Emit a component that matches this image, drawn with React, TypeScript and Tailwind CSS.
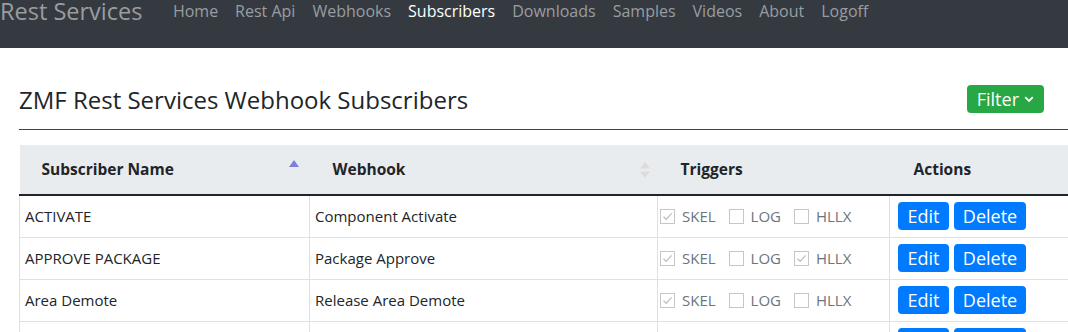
import React from "react";

const navItems = ["Home", "Rest Api", "Webhooks", "Subscribers", "Downloads", "Samples", "Videos", "About", "Logoff"];

type Row = { name: string; hook: string; skel: boolean; log: boolean; hllx: boolean };
const rows: Row[] = [
  { name: "ACTIVATE", hook: "Component Activate", skel: true, log: false, hllx: false },
  { name: "APPROVE PACKAGE", hook: "Package Approve", skel: true, log: false, hllx: true },
  { name: "Area Demote", hook: "Release Area Demote", skel: true, log: false, hllx: false },
  { name: "Area Promote", hook: "Release Area Promote", skel: true, log: false, hllx: false },
];

function Box({ checked }: { checked: boolean }) {
  return (
    <span className="inline-flex h-[15px] w-[15px] items-center justify-center border border-[#c6c6c6] bg-white">
      {checked && (
        <svg width="11" height="11" viewBox="0 0 11 11" fill="none">
          <path d="M1.5 5.8 L4.2 8.4 L9.6 2.4" stroke="#bdbdbd" strokeWidth="1.2" />
        </svg>
      )}
    </span>
  );
}

function Trig({ label, checked }: { label: string; checked: boolean }) {
  return (
    <span className="flex items-center gap-[7px]">
      <Box checked={checked} />
      <span className="text-[#6c757d]">{label}</span>
    </span>
  );
}

export default function App() {
  return (
    <div
      className="w-[1068px] h-[332px] overflow-hidden bg-white text-[#212529]"
      style={{ fontFamily: '"Open Sans", "Noto Sans", sans-serif' }}
    >
      <nav className="flex h-[48px] items-start bg-[#343a40]">
        <span className="-mt-[5px] text-[23.5px] leading-[32px] text-[#9a9da0]">Rest Services</span>
        <ul className="ml-[22px] flex -mt-[1px]">
          {navItems.map((n) => (
            <li
              key={n}
              className={`px-[8.5px] text-[16px] leading-[24px] ${n === "Subscribers" ? "text-white" : "text-[#9a9da0]"}`}
            >
              {n}
            </li>
          ))}
        </ul>
      </nav>

      <div className="ml-[19px] w-[1049px]">
        <div className="flex w-[1025px] items-start justify-between pt-[37px] h-[81px]">
          <h2 className="text-[24px] leading-[32px] -mt-[1px]">ZMF Rest Services Webhook Subscribers</h2>
          <button className="flex h-[28px] items-center gap-[5px] rounded-[4px] bg-[#28a745] px-[10px] text-[18px] text-white">
            Filter
            <svg width="10" height="7" viewBox="0 0 10 7" fill="none">
              <path d="M1.2 1.2 L5 5 L8.8 1.2" stroke="white" strokeWidth="1.8" />
            </svg>
          </button>
        </div>
        <div className="h-[1px] w-full bg-[#e00000]" />

        <table className="mt-[15px] w-[1049px] table-fixed border-collapse text-[15px]">
          <colgroup>
            <col className="w-[290px]" />
            <col className="w-[348px]" />
            <col className="w-[232px]" />
            <col className="w-[179px]" />
          </colgroup>
          <thead>
            <tr className="h-[50px] border-b-2 border-[#212529]">
              <th className="relative bg-[#e9ecef] pl-[22px] text-left font-bold text-[15.5px]">
                Subscriber Name
                <svg className="absolute right-[11px] top-[15px]" width="10" height="7" viewBox="0 0 10 7">
                  <path d="M5 0 L10 7 L0 7 Z" fill="#7d7ddc" />
                </svg>
              </th>
              <th className="relative bg-[#e9ecef] pl-[23px] text-left font-bold text-[15.5px]">
                Webhook
                <svg className="absolute right-[8px] top-[17px]" width="10" height="16" viewBox="0 0 10 16">
                  <path d="M5 0 L10 6.5 L0 6.5 Z M5 16 L10 9.5 L0 9.5 Z" fill="#dcdcdc" />
                </svg>
              </th>
              <th className="bg-[#e9ecef] pl-[23px] text-left font-bold text-[15.5px]">Triggers</th>
              <th className="bg-[#e9ecef] pl-[24px] text-left font-bold text-[15.5px]">Actions</th>
            </tr>
          </thead>
          <tbody>
            {rows.map((r) => (
              <tr key={r.name} className="h-[42px] border-b border-[#dee2e6]">
                <td className="border-l border-r border-[#dee2e6] pl-[5px]">{r.name}</td>
                <td className="border-r border-[#dee2e6] pl-[5px]">{r.hook}</td>
                <td className="border-r border-[#dee2e6] pl-[2px]">
                  <div className="flex items-center gap-[13px]">
                    <Trig label="SKEL" checked={r.skel} />
                    <Trig label="LOG" checked={r.log} />
                    <Trig label="HLLX" checked={r.hllx} />
                  </div>
                </td>
                <td className="pl-[8px]">
                  <div className="flex gap-[5px]">
                    <button className="h-[28px] w-[51px] rounded-[4px] bg-[#007bff] text-[18px] text-white">Edit</button>
                    <button className="h-[28px] w-[72px] rounded-[4px] bg-[#007bff] text-[18px] text-white">Delete</button>
                  </div>
                </td>
              </tr>
            ))}
          </tbody>
        </table>
      </div>
    </div>
  );
}
